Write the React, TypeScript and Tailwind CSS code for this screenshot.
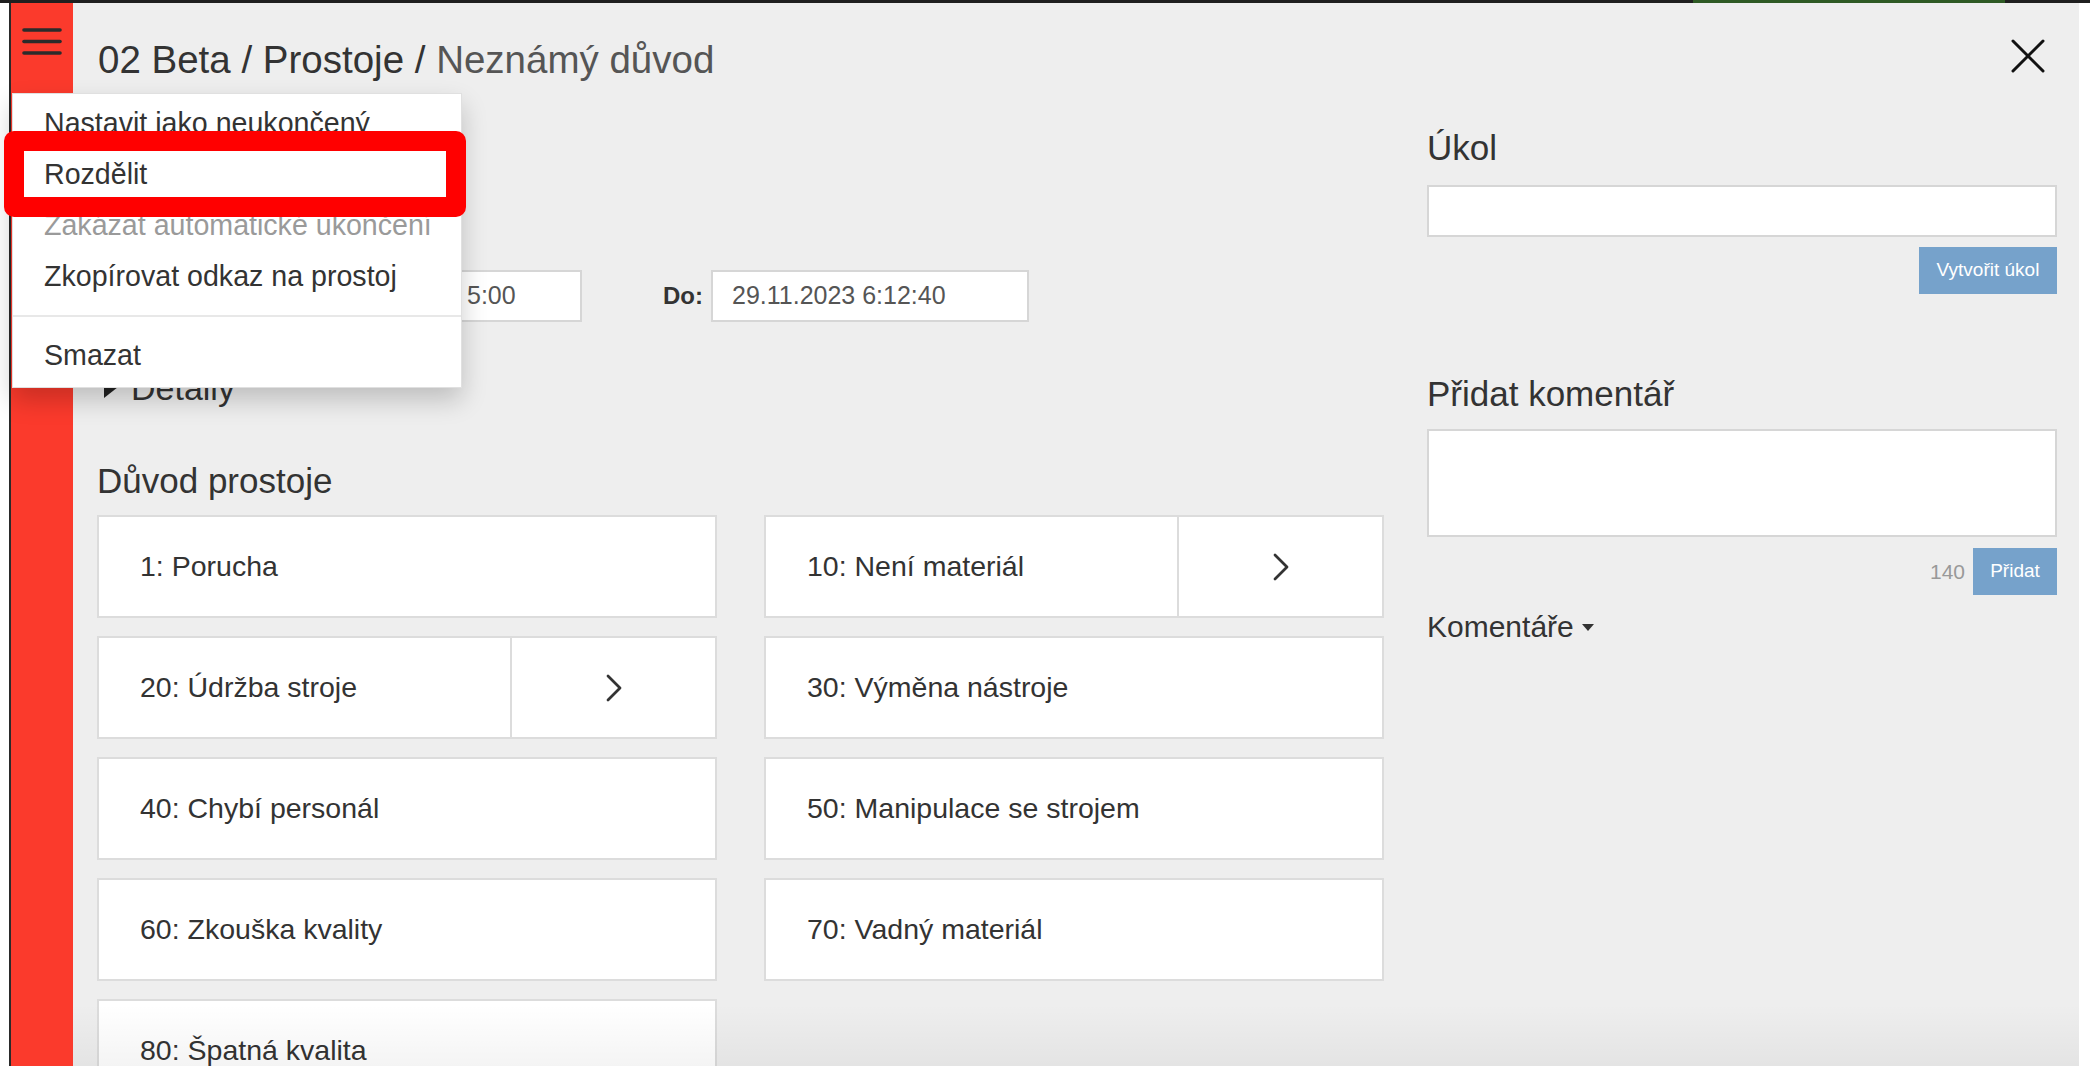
import React from "react";

const Chevron = () => (
  <svg width="18" height="28" viewBox="0 0 18 28" fill="none">
    <polyline points="3,2 15,14 3,26" stroke="#333" strokeWidth="2.8" strokeLinecap="round" strokeLinejoin="round" />
  </svg>
);

type Item = { label: string; split?: boolean };

const items: Item[] = [
  { label: "1: Porucha" },
  { label: "10: Není materiál", split: true },
  { label: "20: Údržba stroje", split: true },
  { label: "30: Výměna nástroje" },
  { label: "40: Chybí personál" },
  { label: "50: Manipulace se strojem" },
  { label: "60: Zkouška kvality" },
  { label: "70: Vadný materiál" },
  { label: "80: Špatná kvalita" },
];

function ReasonButton({ item }: { item: Item }) {
  return (
    <div className="flex h-[103px] bg-white border-2 border-[#dcdcdc]">
      <div className="flex-1 flex items-center pl-[41px] text-[28.5px] text-[#333]">{item.label}</div>
      {item.split && (
        <div className="w-[205px] border-l-2 border-[#dcdcdc] flex items-center justify-center">
          <Chevron />
        </div>
      )}
    </div>
  );
}

export default function App() {
  return (
    <div className="relative w-[2090px] h-[1077px] overflow-hidden bg-white font-['Liberation_Sans',Arial,sans-serif] text-[#333]">
      {/* top strip */}
      <div className="flex h-[3px] bg-[#1f1f1f]">
        <div className="ml-[1693px] w-[312px] bg-[#2e5a24]" />
      </div>
      <div className="flex h-[1063px]">
        <div className="w-[9px] shrink-0 bg-white" />
        <div className="w-[2px] shrink-0 bg-[#2a2a2a]" />
        <div className="w-[62px] shrink-0 bg-[#fb3a2c] pt-[25px] pl-[11px]">
          <svg width="40" height="28" viewBox="0 0 40 28">
            <line x1="2" y1="2" x2="38" y2="2" stroke="#2b2b2b" strokeWidth="3.6" strokeLinecap="round" />
            <line x1="2" y1="13.5" x2="38" y2="13.5" stroke="#2b2b2b" strokeWidth="3.6" strokeLinecap="round" />
            <line x1="2" y1="25" x2="38" y2="25" stroke="#2b2b2b" strokeWidth="3.6" strokeLinecap="round" />
          </svg>
        </div>
        <div className="relative flex-1 flex flex-col bg-[#eeeeee] overflow-hidden">
          {/* header */}
          <div className="shrink-0 flex justify-between items-start h-[97px] pl-[25px] pr-[34px]">
            <div className="mt-[35px] text-[38.5px] leading-[44px] whitespace-nowrap">
              <span className="text-[#333]">02 Beta / Prostoje / </span>
              <span className="text-[#555]">Neznámý důvod</span>
            </div>
            <svg className="mt-[36px]" width="34" height="34" viewBox="0 0 34 34">
              <line x1="2" y1="2" x2="32" y2="32" stroke="#111" strokeWidth="3" strokeLinecap="round" />
              <line x1="32" y1="2" x2="2" y2="32" stroke="#111" strokeWidth="3" strokeLinecap="round" />
            </svg>
          </div>

          {/* main */}
          <div className="shrink-0 flex pl-[24px] pr-[22px] gap-[43px]">
            {/* left column */}
            <div className="w-[1287px] shrink-0 flex flex-col">
              <div className="mt-[170px] h-[52px] flex items-center">
                <div className="w-[182px]" />
                <div className="w-[303px] h-[52px] bg-white border-2 border-[#d6d6d6] flex items-center pl-[186px] text-[25px] text-[#555] whitespace-nowrap overflow-hidden">
                  5:00
                </div>
                <div className="w-[81px]" />
                <div className="w-[48px] text-[24px] font-bold">Do:</div>
                <div className="w-[318px] h-[52px] bg-white border-2 border-[#d6d6d6] flex items-center pl-[19px] text-[25px] text-[#555] whitespace-nowrap">
                  29.11.2023 6:12:40
                </div>
              </div>

              <div className="mt-[45px] h-[42px] flex items-center">
                <svg className="ml-[6px]" width="15" height="20" viewBox="0 0 15 20">
                  <polygon points="1,0 15,9 1,20" fill="#222" />
                </svg>
                <span className="ml-[13px] text-[34px] leading-[42px]">Detaily</span>
              </div>

              <div className="mt-[51px] text-[35px] leading-[42px]">Důvod prostoje</div>

              <div className="mt-[13px] grid grid-cols-2 gap-x-[47px] gap-y-[18px]">
                {items.map((it) => (
                  <ReasonButton key={it.label} item={it} />
                ))}
              </div>
            </div>

            {/* right column */}
            <div className="w-[630px] shrink-0 flex flex-col">
              <div className="mt-[27px] text-[35px] leading-[42px]">Úkol</div>
              <div className="mt-[16px] h-[52px] bg-white border-2 border-[#d6d6d6]" />
              <div className="mt-[10px] self-end w-[138px] h-[47px] bg-[#76a2cb] text-white text-[19px] flex items-center justify-center">
                Vytvořit úkol
              </div>

              <div className="mt-[79px] text-[35px] leading-[42px]">Přidat komentář</div>
              <div className="mt-[14px] h-[108px] bg-white border-2 border-[#d6d6d6]" />
              <div className="mt-[11px] h-[47px] flex justify-end items-center gap-[8px]">
                <span className="text-[21px] text-[#999]">140</span>
                <div className="w-[84px] h-[47px] bg-[#76a2cb] text-white text-[19px] flex items-center justify-center">
                  Přidat
                </div>
              </div>

              <div className="mt-[14px] h-[36px] flex items-center gap-[8px]">
                <span className="text-[30px] leading-[36px]">Komentáře</span>
                <svg width="12" height="7" viewBox="0 0 12 7">
                  <polygon points="0,0 12,0 6,7" fill="#333" />
                </svg>
              </div>
            </div>
          </div>

          <div className="absolute bottom-0 left-0 right-0 h-[62px] bg-linear-to-b from-[rgba(0,0,0,0)] to-[rgba(0,0,0,0.045)]" />
        </div>
        <div className="w-[11px] shrink-0 bg-white" />
      </div>
      <div className="h-[11px] bg-white" />

      {/* dropdown menu */}
      <div className="absolute left-[12px] top-[93px] w-[450px] bg-white border border-[rgba(0,0,0,0.12)] shadow-[0_12px_24px_rgba(0,0,0,0.2)] pt-[4px] pb-[6px] text-[28.6px]">
        <div className="h-[51px] flex items-center pl-[31px] text-[#333] whitespace-nowrap">Nastavit jako neukončený</div>
        <div className="h-[51px] flex items-center pl-[31px] text-[#333]">Rozdělit</div>
        <div className="h-[51px] flex items-center pl-[31px] text-[#9a9a9a] whitespace-nowrap">Zakázat automatické ukončení</div>
        <div className="h-[51px] flex items-center pl-[31px] text-[#333] whitespace-nowrap">Zkopírovat odkaz na prostoj</div>
        <div className="my-[13px] h-[2px] bg-[#e8e8e8]" />
        <div className="h-[51px] flex items-center pl-[31px] text-[#333]">Smazat</div>
      </div>

      {/* red annotation box */}
      <div className="absolute left-[4px] top-[131px] w-[462px] h-[86px] border-[20px] border-[#ff0000] rounded-[10px]" />
    </div>
  );
}
